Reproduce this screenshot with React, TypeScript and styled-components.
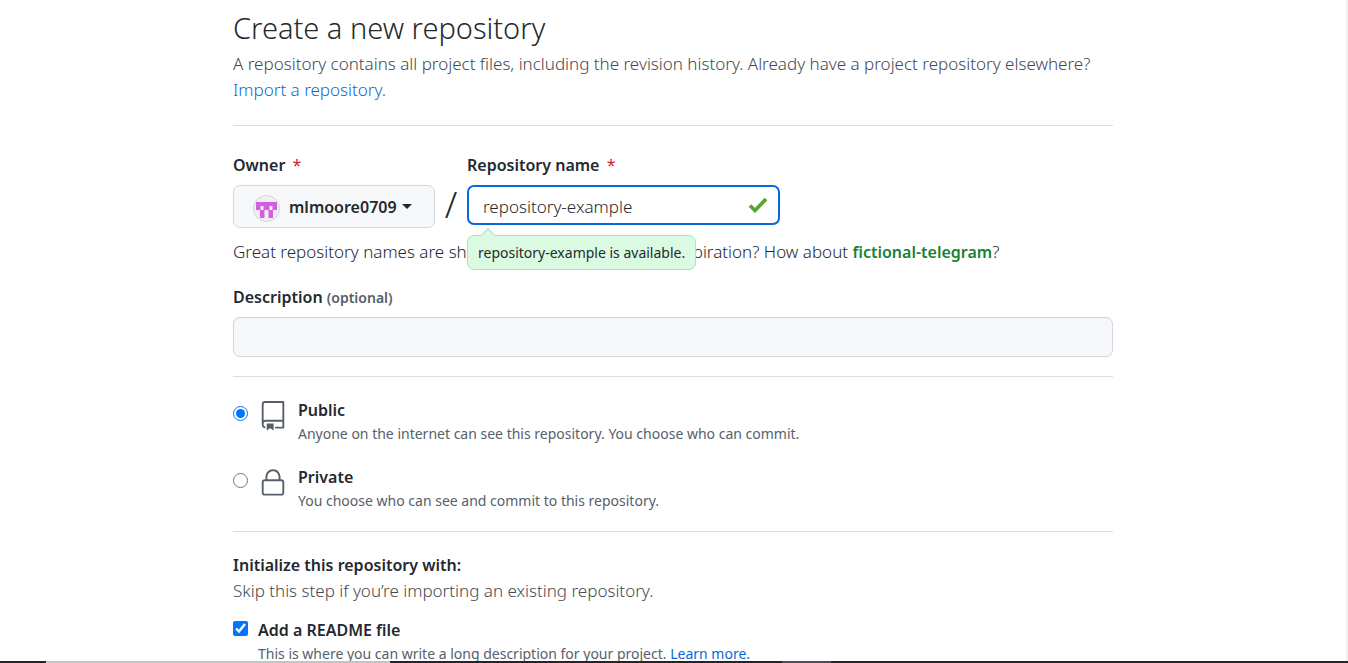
import React from "react";
import styled, { createGlobalStyle } from "styled-components";

const Global = createGlobalStyle`
  *, *::before, *::after { box-sizing: border-box; }
  body {
    margin: 0;
    background: #fff;
    color: #24292f;
    font-family: "Noto Sans", "Open Sans", sans-serif;
    font-size: 17px;
    font-weight: 300;
    line-height: 26px;
  }
`;

const Page = styled.div`
  height: 100vh;
  overflow: hidden;
  border-right: 2px solid #f1f1f1;
`;

const Main = styled.main`
  max-width: 880px;
  margin: 0 auto;
  padding-top: 5px;
`;

const Title = styled.h1`
  margin: 0 0 1px;
  font-size: 29px;
  font-weight: 300;
  line-height: 45px;
`;

const Muted = styled.p`
  margin: 0;
  color: #424a53;
`;

const Link = styled.a`
  color: #0969da;
  text-decoration: none;
`;

const Section = styled.section<{ $top: number; $bottom: number }>`
  padding: ${(p) => p.$top}px 0 ${(p) => p.$bottom}px;
  border-top: 1px solid #d8dee4;
`;

const Intro = styled.header`
  padding-bottom: 22px;
`;

const FieldRow = styled.div`
  display: flex;
  align-items: flex-start;
`;

const Field = styled.div`
  position: relative;
  display: flex;
  flex-direction: column;
  gap: 7px;
`;

const Label = styled.label`
  font-size: 16px;
  font-weight: 600;
`;

const Required = styled.span`
  margin-left: 3px;
  color: #cf222e;
  font-weight: 400;
`;

const Optional = styled.span`
  color: #57606a;
  font-size: 14px;
  line-height: 20px;
`;

const OwnerButton = styled.button`
  display: flex;
  align-items: center;
  width: 202px;
  height: 43px;
  padding: 0 19px;
  border: 1px solid #d5d8da;
  border-radius: 7px;
  background: #f6f8fa;
  color: #24292f;
  font: inherit;
  font-size: 16px;
  font-weight: 600;
`;

const Avatar = styled.svg`
  flex: none;
  width: 27px;
  height: 27px;
  margin-right: 9px;
  margin-top: 3px;
`;

const Caret = styled.span`
  margin-left: 5px;
  border: 5px solid transparent;
  border-top-color: currentColor;
  border-bottom: 0;
`;

const Slash = styled.span`
  width: 32px;
  padding-top: 33px;
  font-size: 36px;
  line-height: 40px;
  text-align: center;
`;

const InputWrap = styled.div`
  position: relative;
  width: 313px;
`;

const Input = styled.input<{ $active?: boolean }>`
  display: block;
  width: 100%;
  height: 40px;
  padding: 2px 14px 0;
  border: ${(p) => (p.$active ? "2px solid #0969da" : "1px solid #d0d7de")};
  border-radius: 7px;
  outline: none;
  background: ${(p) => (p.$active ? "#fff" : "#f6f8fa")};
  box-shadow: ${(p) => (p.$active ? "none" : "inset 0 1px 0 rgba(208, 215, 222, 0.2)")};
  color: #24292f;
  font: inherit;
`;

const Check = styled.svg`
  position: absolute;
  top: 12px;
  right: 12px;
  width: 20px;
  height: 16px;
`;

const Tooltip = styled.div`
  position: absolute;
  top: 83px;
  left: 0;
  padding: 4px 10px;
  border: 1px solid #a6e8b3;
  border-radius: 7px;
  background: #dafbe1;
  font-size: 14px;
  font-weight: 400;
  line-height: 25px;
  white-space: nowrap;

  &::before {
    content: "";
    position: absolute;
    top: -6px;
    left: 15px;
    width: 10px;
    height: 10px;
    border: solid #a6e8b3;
    border-width: 1px 0 0 1px;
    background: linear-gradient(135deg, #dafbe1 50%, transparent 50%);
    transform: rotate(45deg);
  }
`;

const Hint = styled.p`
  margin: 11px 0 19px;
`;

const Suggestion = styled.strong`
  color: #1a7f37;
  font-size: 16px;
  font-weight: 600;
`;

const Choices = styled.div`
  display: flex;
  flex-direction: column;
  gap: 19px;
`;

const Choice = styled.div`
  display: flex;
  align-items: flex-start;
  gap: 10px;
`;

const Control = styled.input<{ $top: number }>`
  flex: none;
  width: 15px;
  height: 15px;
  margin: ${(p) => p.$top}px 0 0;
  accent-color: #0075ff;
`;

const Icon = styled.svg`
  flex: none;
  width: 30px;
  height: 30px;
  margin-top: 4px;
  fill: #57606a;
`;

const ChoiceText = styled.div`
  display: flex;
  flex-direction: column;
`;

const Note = styled.span`
  color: #57606a;
  font-size: 14px;
  font-weight: 400;
  line-height: 22px;
`;

const SectionTitle = styled.h2`
  margin: 0;
  font-size: 16px;
  font-weight: 600;
  line-height: 26px;
`;

const Setup = styled.div`
  padding-top: 13px;
`;

const BottomEdge = styled.div`
  position: fixed;
  right: 0;
  bottom: 0;
  left: 0;
  display: flex;
  height: 2px;
`;

const Edge = styled.div<{ $size: number; $color: string }>`
  flex: ${(p) => p.$size} 0 0;
  background: ${(p) => p.$color};
`;

export default function App() {
  return (
    <Page>
      <Global />
      <Main>
        <Intro>
          <Title>Create a new repository</Title>
          <Muted>
            A repository contains all project files, including the revision history. Already have a project
            repository elsewhere? <Link href="#import">Import a repository.</Link>
          </Muted>
        </Intro>

        <Section $top={26} $bottom={19}>
          <FieldRow>
            <Field>
              <Label htmlFor="owner">
                Owner <Required>*</Required>
              </Label>
              <OwnerButton id="owner" type="button">
                <Avatar viewBox="0 0 27 27" aria-hidden="true">
                  <circle cx="13.5" cy="13.5" r="13" fill="#f0f0f0" stroke="#d0d4d8" />
                  <path
                    fill="#d35ee0"
                    d="M3 7h21v8h-4v8h-4.500v-8h-4v8H7v-8H3z"
                  />
                  <path fill="#f0f0f0" d="M7.500 11h3v4h-3zM16.500 11h3v4h-3z" />
                </Avatar>
                mlmoore0709
                <Caret />
              </OwnerButton>
            </Field>
            <Slash>/</Slash>
            <Field>
              <Label htmlFor="name">
                Repository name <Required>*</Required>
              </Label>
              <InputWrap>
                <Input id="name" type="text" defaultValue="repository-example" $active />
                <Check viewBox="0 0 20 16" aria-hidden="true">
                  <path d="M2 8.5l5 5L18 2" fill="none" stroke="#55a532" strokeWidth="3.6" />
                </Check>
              </InputWrap>
              <Tooltip role="status">repository-example is available.</Tooltip>
            </Field>
          </FieldRow>
          <Hint>
            Great repository names are short and memorable. Need inspiration? How about{" "}
            <Suggestion>fictional-telegram</Suggestion>?
          </Hint>
          <Field>
            <Label htmlFor="description">
              Description <Optional>(optional)</Optional>
            </Label>
            <Input id="description" type="text" />
          </Field>
        </Section>

        <Section $top={20} $bottom={19}>
          <Choices>
            <Choice>
              <Control $top={9} type="radio" name="visibility" id="public" defaultChecked />
              <Icon viewBox="0 0 24 24" aria-hidden="true">
                <path
                  fillRule="evenodd"
                  d="M3 2.75A2.75 2.75 0 015.75 0h14.5a.75.75 0 01.75.75v20.5a.75.75 0 01-.75.75h-6a.75.75 0 010-1.5h5.25v-4H6A1.5 1.5 0 004.5 18v.75c0 .716.43 1.334 1.05 1.605a.75.75 0 01-.6 1.374A3.25 3.25 0 013 18.75v-16zM19.5 1.5V15H6c-.546 0-1.059.146-1.5.401V2.75c0-.69.56-1.25 1.25-1.25H19.5z"
                />
                <path d="M7 18.25a.25.25 0 01.25-.25h5a.25.25 0 01.25.25v5.01a.25.25 0 01-.397.201l-2.206-1.604a.25.25 0 00-.294 0L7.397 23.46a.25.25 0 01-.397-.2v-5.01z" />
              </Icon>
              <ChoiceText>
                <Label htmlFor="public">Public</Label>
                <Note>Anyone on the internet can see this repository. You choose who can commit.</Note>
              </ChoiceText>
            </Choice>
            <Choice>
              <Control $top={9} type="radio" name="visibility" id="private" />
              <Icon viewBox="0 0 24 24" aria-hidden="true">
                <path
                  fillRule="evenodd"
                  d="M6 9V7.25C6 3.845 8.503 1 12 1s6 2.845 6 6.25V9h.5a2.5 2.5 0 012.5 2.5v8a2.5 2.5 0 01-2.5 2.5h-13A2.5 2.5 0 013 19.5v-8A2.5 2.5 0 015.5 9H6zm1.5-1.75C7.5 4.58 9.422 2.5 12 2.5c2.578 0 4.5 2.08 4.5 4.75V9h-9V7.25zm-3 4.25a1 1 0 011-1h13a1 1 0 011 1v8a1 1 0 01-1 1h-13a1 1 0 01-1-1v-8z"
                />
              </Icon>
              <ChoiceText>
                <Label htmlFor="private">Private</Label>
                <Note>You choose who can see and commit to this repository.</Note>
              </ChoiceText>
            </Choice>
          </Choices>
        </Section>

        <Section $top={20} $bottom={0}>
          <SectionTitle>Initialize this repository with:</SectionTitle>
          <Muted>Skip this step if you’re importing an existing repository.</Muted>
          <Setup>
            <Choice>
              <Control $top={4} type="checkbox" id="readme" defaultChecked />
              <ChoiceText>
                <Label htmlFor="readme">Add a README file</Label>
                <Note>
                  This is where you can write a long description for your project.{" "}
                  <Link href="#readme-help">Learn more.</Link>
                </Note>
              </ChoiceText>
            </Choice>
          </Setup>
        </Section>
      </Main>
      <BottomEdge aria-hidden="true">
        <Edge $size={46} $color="#24252a" />
        <Edge $size={344} $color="#c4c4c4" />
        <Edge $size={392} $color="#24252a" />
        <Edge $size={49} $color="#505155" />
        <Edge $size={517} $color="#24252a" />
      </BottomEdge>
    </Page>
  );
}
